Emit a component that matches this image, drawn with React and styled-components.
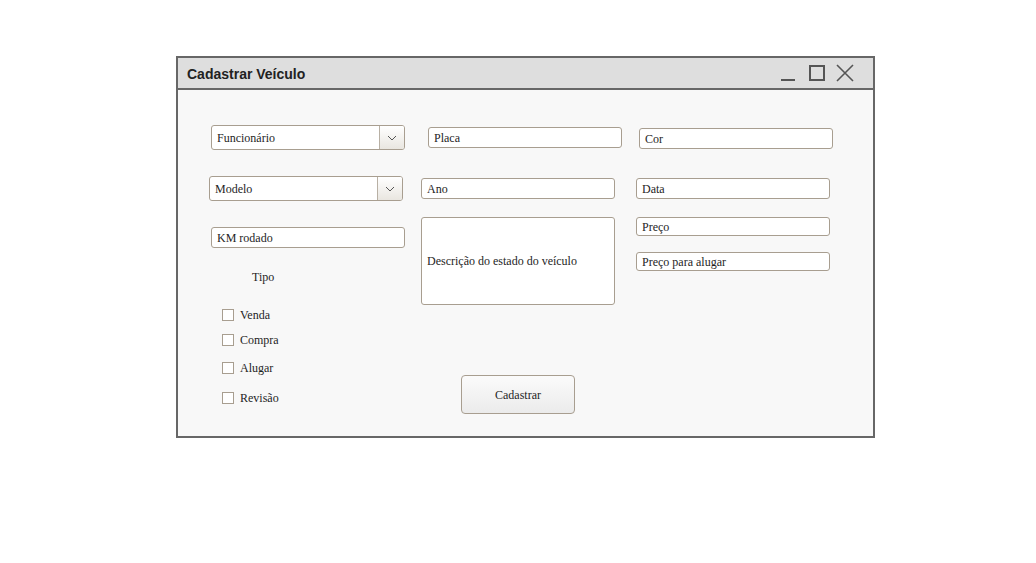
import React from "react";
import styled, { createGlobalStyle } from "styled-components";

const SERIF = `"Liberation Serif", "Times New Roman", serif`;

const Global = createGlobalStyle`
  html, body { margin: 0; padding: 0; background: #ffffff; }
  body { font-family: ${SERIF}; }
`;

const Page = styled.div`
  padding: 56px 0 0 176px;
  width: 1036px;
  height: 563px;
  box-sizing: border-box;
`;

const Window = styled.div`
  width: 699px;
  height: 382px;
  box-sizing: border-box;
  border: 2px solid #676767;
  background: #f8f8f8;
  display: flex;
  flex-direction: column;
`;

const TitleBar = styled.div`
  height: 32px;
  box-sizing: border-box;
  background: #dedede;
  border-bottom: 2px solid #676767;
  display: flex;
  align-items: center;
  padding: 0 19px 0 9px;
`;

const Title = styled.div`
  flex: 1;
  font-family: "Liberation Sans", Arial, sans-serif;
  font-weight: bold;
  font-size: 14px;
  color: #222;
  padding-top: 1px;
`;

const Controls = styled.div`
  display: flex;
  align-items: center;
`;

const Ctrl = styled.svg`
  display: block;
  margin-left: ${(p) => p.$ml || 0}px;
`;

const Body = styled.div`
  flex: 1;
  display: flex;
  padding-left: 31px;
`;

const Column = styled.div`
  width: ${(p) => p.$w}px;
  display: flex;
  flex-direction: column;
  align-items: flex-start;
`;

const Field = styled.div`
  width: 194px;
  height: ${(p) => p.$h || 21}px;
  margin-top: ${(p) => p.$mt}px;
  margin-left: ${(p) => p.$ml || 0}px;
  box-sizing: border-box;
  border: 1px solid #a89e90;
  border-radius: 3px;
  background: #ffffff;
  font-family: ${SERIF};
  font-size: 12px;
  color: #1e1e1e;
  padding: 1px 0 0 5px;
  display: flex;
  align-items: center;
  flex-shrink: 0;
`;

const Select = styled.div`
  width: 194px;
  height: 25px;
  margin-top: ${(p) => p.$mt}px;
  margin-left: ${(p) => p.$ml || 0}px;
  box-sizing: border-box;
  border: 1px solid #a89e90;
  border-radius: 3px;
  background: #ffffff;
  display: flex;
  overflow: hidden;
  flex-shrink: 0;
`;

const SelectText = styled.div`
  flex: 1;
  font-family: ${SERIF};
  font-size: 12px;
  color: #1e1e1e;
  padding: 1px 0 0 5px;
  display: flex;
  align-items: center;
`;

const SelectButton = styled.div`
  width: 24px;
  border-left: 1px solid #b8b0a4;
  background: linear-gradient(#ffffff, #e9e6e0);
  display: flex;
  align-items: center;
  justify-content: center;
`;

const TipoLabel = styled.div`
  margin-top: 22px;
  margin-left: 43px;
  font-family: ${SERIF};
  font-size: 12px;
  line-height: 14px;
  color: #1e1e1e;
`;

const CheckRow = styled.div`
  display: flex;
  align-items: center;
  height: 14px;
  margin-top: ${(p) => p.$mt}px;
  margin-left: 13px;
  font-family: ${SERIF};
  font-size: 12px;
  color: #1e1e1e;
`;

const Box = styled.span`
  width: 12px;
  height: 12px;
  box-sizing: border-box;
  border: 1px solid #a89e90;
  background: #ffffff;
  margin-right: 6px;
`;

const TextArea = styled(Field)`
  align-items: center;
`;

const Button = styled.button`
  margin-top: ${(p) => p.$mt}px;
  margin-left: ${(p) => p.$ml}px;
  width: 114px;
  height: 39px;
  border: 1px solid #a89e90;
  border-radius: 4px;
  background: linear-gradient(#fbfbfb, #ebebeb);
  font-family: ${SERIF};
  font-size: 12px;
  color: #1e1e1e;
  padding: 2px 0 0 0;
`;

const Chevron = () => (
  <svg width="10" height="6" viewBox="0 0 10 6">
    <path d="M1 1 L5 5 L9 1" fill="none" stroke="#555" strokeWidth="1" />
  </svg>
);

const SelectBox = ({ label, mt, ml }) => (
  <Select $mt={mt} $ml={ml}>
    <SelectText>{label}</SelectText>
    <SelectButton>
      <Chevron />
    </SelectButton>
  </Select>
);

export default function App() {
  return (
    <>
      <Global />
      <Page>
        <Window>
          <TitleBar>
            <Title>Cadastrar Veículo</Title>
            <Controls>
              <Ctrl width="14" height="18" viewBox="0 0 14 18">
                <rect x="0" y="15" width="14" height="2" fill="#555" />
              </Ctrl>
              <Ctrl $ml={14} width="16" height="18" viewBox="0 0 16 18">
                <rect x="1" y="2" width="14" height="14" fill="none" stroke="#555" strokeWidth="2" />
              </Ctrl>
              <Ctrl $ml={11} width="18" height="18" viewBox="0 0 18 18">
                <path d="M1 1 L17 17 M17 1 L1 17" stroke="#555" strokeWidth="1.6" />
              </Ctrl>
            </Controls>
          </TitleBar>
          <Body>
            <Column $w={212}>
              <SelectBox label="Funcionário" mt={35} ml={2} />
              <SelectBox label="Modelo" mt={26} ml={0} />
              <Field $mt={26} $ml={2}>KM rodado</Field>
              <TipoLabel>Tipo</TipoLabel>
              <CheckRow $mt={24}><Box />Venda</CheckRow>
              <CheckRow $mt={11}><Box />Compra</CheckRow>
              <CheckRow $mt={14}><Box />Alugar</CheckRow>
              <CheckRow $mt={16}><Box />Revisão</CheckRow>
            </Column>
            <Column $w={215}>
              <Field $mt={37} $ml={7}>Placa</Field>
              <Field $mt={30}>Ano</Field>
              <TextArea $mt={18} $h={88}>Descrição do estado do veículo</TextArea>
              <Button $mt={70} $ml={40}>Cadastrar</Button>
            </Column>
            <Column $w={220}>
              <Field $mt={38} $ml={3}>Cor</Field>
              <Field $mt={29}>Data</Field>
              <Field $mt={18} $h={19}>Preço</Field>
              <Field $mt={16} $h={19}>Preço para alugar</Field>
            </Column>
          </Body>
        </Window>
      </Page>
    </>
  );
}
